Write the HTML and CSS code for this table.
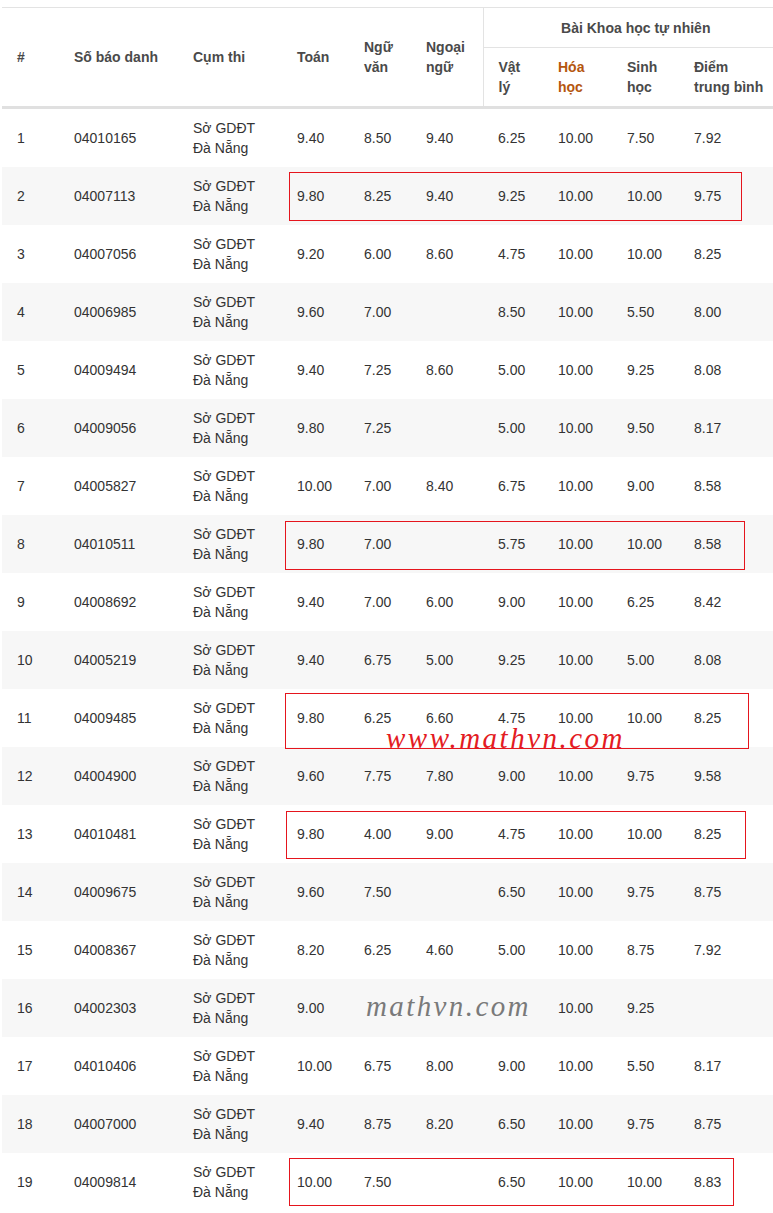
FILE: index.html
```html
<!DOCTYPE html>
<html lang="vi">
<head>
<meta charset="utf-8">
<title>Kết quả thi</title>
<link rel="stylesheet" href="styles.css">
</head>
<body>
<div class="page">
  <table class="scores">
    <colgroup>
      <col class="c-idx"><col class="c-sbd"><col class="c-cum"><col class="c-toan"><col class="c-van"><col class="c-nn"><col class="c-ly"><col class="c-hoa"><col class="c-sinh"><col class="c-tb">
    </colgroup>
    <thead>
      <tr class="h1">
        <th rowspan="2">#</th>
        <th rowspan="2">Số báo danh</th>
        <th rowspan="2">Cụm thi</th>
        <th rowspan="2">Toán</th>
        <th rowspan="2">Ngữ văn</th>
        <th rowspan="2">Ngoại ngữ</th>
        <th colspan="4" class="group">Bài Khoa học tự nhiên</th>
      </tr>
      <tr class="h2">
        <th class="first">Vật lý</th>
        <th class="hl">Hóa học</th>
        <th>Sinh học</th>
        <th>Điểm<br>trung bình</th>
      </tr>
    </thead>
    <tbody>
      <tr><td>1</td><td>04010165</td><td>Sở GDĐT Đà Nẵng</td><td>9.40</td><td>8.50</td><td>9.40</td><td>6.25</td><td>10.00</td><td>7.50</td><td>7.92</td></tr>
      <tr><td>2</td><td>04007113</td><td>Sở GDĐT Đà Nẵng</td><td>9.80</td><td>8.25</td><td>9.40</td><td>9.25</td><td>10.00</td><td>10.00</td><td>9.75</td></tr>
      <tr><td>3</td><td>04007056</td><td>Sở GDĐT Đà Nẵng</td><td>9.20</td><td>6.00</td><td>8.60</td><td>4.75</td><td>10.00</td><td>10.00</td><td>8.25</td></tr>
      <tr><td>4</td><td>04006985</td><td>Sở GDĐT Đà Nẵng</td><td>9.60</td><td>7.00</td><td></td><td>8.50</td><td>10.00</td><td>5.50</td><td>8.00</td></tr>
      <tr><td>5</td><td>04009494</td><td>Sở GDĐT Đà Nẵng</td><td>9.40</td><td>7.25</td><td>8.60</td><td>5.00</td><td>10.00</td><td>9.25</td><td>8.08</td></tr>
      <tr><td>6</td><td>04009056</td><td>Sở GDĐT Đà Nẵng</td><td>9.80</td><td>7.25</td><td></td><td>5.00</td><td>10.00</td><td>9.50</td><td>8.17</td></tr>
      <tr><td>7</td><td>04005827</td><td>Sở GDĐT Đà Nẵng</td><td>10.00</td><td>7.00</td><td>8.40</td><td>6.75</td><td>10.00</td><td>9.00</td><td>8.58</td></tr>
      <tr><td>8</td><td>04010511</td><td>Sở GDĐT Đà Nẵng</td><td>9.80</td><td>7.00</td><td></td><td>5.75</td><td>10.00</td><td>10.00</td><td>8.58</td></tr>
      <tr><td>9</td><td>04008692</td><td>Sở GDĐT Đà Nẵng</td><td>9.40</td><td>7.00</td><td>6.00</td><td>9.00</td><td>10.00</td><td>6.25</td><td>8.42</td></tr>
      <tr><td>10</td><td>04005219</td><td>Sở GDĐT Đà Nẵng</td><td>9.40</td><td>6.75</td><td>5.00</td><td>9.25</td><td>10.00</td><td>5.00</td><td>8.08</td></tr>
      <tr><td>11</td><td>04009485</td><td>Sở GDĐT Đà Nẵng</td><td>9.80</td><td>6.25</td><td>6.60</td><td>4.75</td><td>10.00</td><td>10.00</td><td>8.25</td></tr>
      <tr><td>12</td><td>04004900</td><td>Sở GDĐT Đà Nẵng</td><td>9.60</td><td>7.75</td><td>7.80</td><td>9.00</td><td>10.00</td><td>9.75</td><td>9.58</td></tr>
      <tr><td>13</td><td>04010481</td><td>Sở GDĐT Đà Nẵng</td><td>9.80</td><td>4.00</td><td>9.00</td><td>4.75</td><td>10.00</td><td>10.00</td><td>8.25</td></tr>
      <tr><td>14</td><td>04009675</td><td>Sở GDĐT Đà Nẵng</td><td>9.60</td><td>7.50</td><td></td><td>6.50</td><td>10.00</td><td>9.75</td><td>8.75</td></tr>
      <tr><td>15</td><td>04008367</td><td>Sở GDĐT Đà Nẵng</td><td>8.20</td><td>6.25</td><td>4.60</td><td>5.00</td><td>10.00</td><td>8.75</td><td>7.92</td></tr>
      <tr><td>16</td><td>04002303</td><td>Sở GDĐT Đà Nẵng</td><td>9.00</td><td></td><td></td><td></td><td>10.00</td><td>9.25</td><td></td></tr>
      <tr><td>17</td><td>04010406</td><td>Sở GDĐT Đà Nẵng</td><td>10.00</td><td>6.75</td><td>8.00</td><td>9.00</td><td>10.00</td><td>5.50</td><td>8.17</td></tr>
      <tr><td>18</td><td>04007000</td><td>Sở GDĐT Đà Nẵng</td><td>9.40</td><td>8.75</td><td>8.20</td><td>6.50</td><td>10.00</td><td>9.75</td><td>8.75</td></tr>
      <tr><td>19</td><td>04009814</td><td>Sở GDĐT Đà Nẵng</td><td>10.00</td><td>7.50</td><td></td><td>6.50</td><td>10.00</td><td>10.00</td><td>8.83</td></tr>
    </tbody>
  </table>

  <div class="mark box-2"></div>
  <div class="mark box-8"></div>
  <div class="mark box-11"></div>
  <div class="mark box-13"></div>
  <div class="mark box-19"></div>

  <div class="wm wm-red">www.mathvn.com</div>
  <div class="wm wm-grey">mathvn.com</div>
</div>
</body>
</html>
```

FILE: styles.css
```css
html, body {
  margin: 0;
  padding: 0;
  background: #ffffff;
}

.page {
  position: relative;
  width: 773px;
  height: 1213px;
  overflow: hidden;
  padding: 7px 0 0 2px;
  box-sizing: border-box;
  font-family: "Liberation Sans", Arial, sans-serif;
  font-size: 14px;
  color: #333333;
}

.scores {
  border-collapse: collapse;
  table-layout: fixed;
  width: 786px;
  border-top: 1px solid #e3e3e3;
}

.c-idx { width: 57px; }
.c-sbd { width: 119px; }
.c-cum { width: 104px; }
.c-toan { width: 67px; }
.c-van { width: 62px; }
.c-nn { width: 72px; }
.c-ly { width: 60px; }
.c-hoa { width: 69px; }
.c-sinh { width: 67px; }
.c-tb { width: 109px; }

.scores th,
.scores td {
  text-align: left;
  line-height: 20px;
  padding: 9px 8px 9px 15px;
  vertical-align: middle;
}

.scores th {
  font-weight: bold;
  color: #4a4a4a;
}

.scores .h1 th.group {
  text-align: center;
  padding: 10px 8px 9px 8px;
  border-left: 1px solid #e3e3e3;
  border-bottom: 1px solid #e3e3e3;
}

.scores .h2 th.first {
  border-left: 1px solid #e3e3e3;
}

.scores .h2 th {
  border-bottom: 3px solid #e0e0e0;
}

.scores .h1 th[rowspan] {
  border-bottom: 3px solid #e0e0e0;
}

.scores .hl {
  color: #b5560e;
}

.scores tbody tr:nth-child(even) td {
  background: #f7f7f7;
}

.mark {
  position: absolute;
  border: 1px solid #e5151d;
  box-sizing: border-box;
}

.box-2 { left: 289px; top: 172px; width: 453px; height: 49px; }
.box-8 { left: 285px; top: 521px; width: 460px; height: 49px; }
.box-11 { left: 285px; top: 693px; width: 464px; height: 56px; }
.box-13 { left: 286px; top: 811px; width: 460px; height: 48px; }
.box-19 { left: 289px; top: 1158px; width: 445px; height: 48px; }

.wm {
  position: absolute;
  font-family: "Liberation Serif", "Times New Roman", serif;
  font-style: italic;
  font-size: 29px;
  line-height: 1;
  letter-spacing: 2.4px;
  white-space: nowrap;
}

.wm-red {
  left: 386px;
  top: 724px;
  color: #e31b23;
  letter-spacing: 2.5px;
}

.wm-grey {
  left: 366px;
  top: 992px;
  color: #7a7a7a;
}
```
